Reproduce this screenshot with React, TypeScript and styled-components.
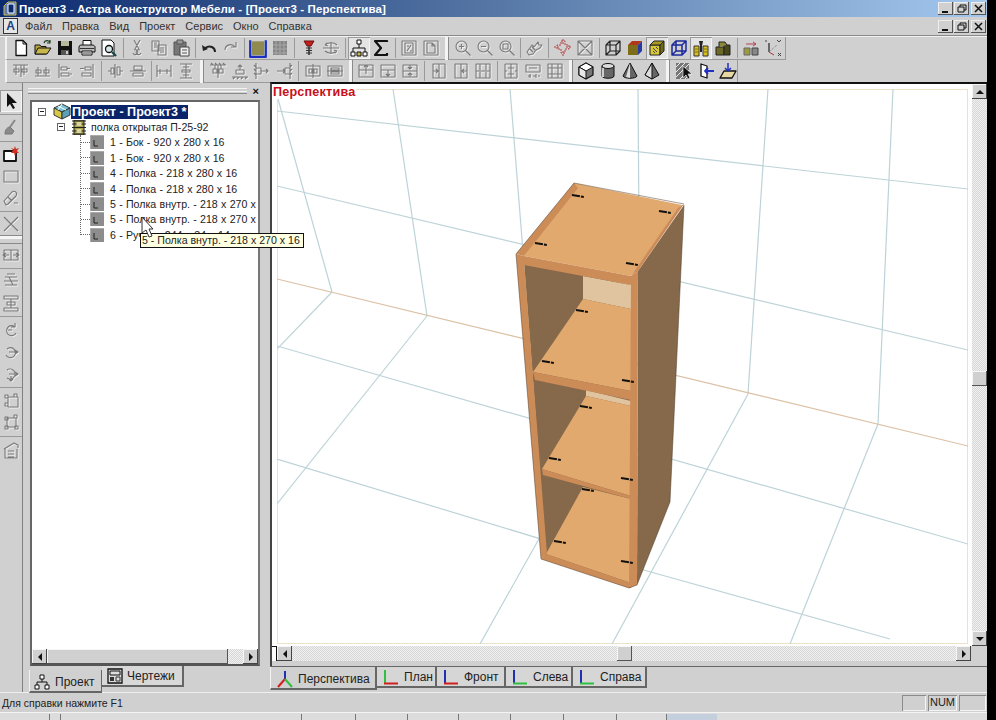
import React from "react";
import styled, { createGlobalStyle } from "styled-components";

const Global = createGlobalStyle`
  html, body { margin: 0; padding: 0; background: #000; overflow: hidden; }
  #root { width: 996px; height: 720px; }
  * { box-sizing: border-box; }
`;
const FACE = "#d0d0d0";
const UI = `"Liberation Sans", Arial, sans-serif`;

const Screen = styled.div`
  width: 996px; height: 720px; display: flex; background: #000; font-family: ${UI}; font-size: 11px; color: #222; overflow: hidden;
`;
const Win = styled.div`
  width: 987px; height: 720px; display: flex; flex-direction: column; background: ${FACE};
`;
const Title = styled.div`
  height: 17px; flex: none; display: flex; align-items: center; padding: 0 1px 0 3px;
  background: linear-gradient(90deg, #0c2a6e 0%, #4e6f9f 45%, #a4c8ee 100%);
  color: #fff; font-weight: bold; font-size: 11.5px;
`;
const TitleText = styled.span` margin-left: 2px; flex: 1; white-space: nowrap; letter-spacing: .12px; `;
const CapBtn = styled.div`
  width: 15px; height: 13px; background: ${FACE}; display: flex; align-items: center; justify-content: center;
  box-shadow: inset -1px -1px #555, inset 1px 1px #eee; margin-left: 1px;
  &:last-child { margin-left: 2px; }
`;
const MenuBar = styled.div`
  height: 19px; flex: none; display: flex; align-items: center; padding: 0 1px 0 3px; border-bottom: 1px solid #8a8a8a;
`;
const MenuLogo = styled.div`
  width: 15px; height: 16px; margin-right: 7px; border: 1px solid #333; background: #e6e6e6; color: #1a3f80; font-weight: bold;
  font-size: 12px; line-height: 14px; text-align: center;
`;
const MenuItem = styled.span` margin-right: 10px; font-size: 11px; letter-spacing: 0; color: #333; `;
const MenuSpacer = styled.div` flex: 1; `;
const TopRows = styled.div` flex: none; border-top: 1px solid #f2f2f2; `;
const Bar = styled.div<{ $start: number; $end: number }>`
  height: 23px; display: flex; align-items: center; margin-left: ${p => p.$start}px; width: ${p => p.$end - p.$start}px;
  padding-left: 3px; border-left: 2px solid #f2f2f2; border-right: 1px solid #9a9a9a; border-bottom: 1px solid #9a9a9a;
`;
const Tool = styled.div<{ $on?: boolean }>`
  width: 22px; height: 22px; flex: none; display: flex; align-items: center; justify-content: center;
  ${p => p.$on ? "background:#e4e4e4; box-shadow: inset 1px 1px #9a9a9a, inset -1px -1px #f6f6f6;" : ""}
`;
const Sep = styled.div<{ $w: number }>`
  width: ${p => p.$w}px; height: 20px; flex: none; display: flex; justify-content: center;
  &::after { content: ""; width: 1px; height: 100%; background: #9a9a9a; }
`;
const Grip = styled.div<{ $w: number }>`
  width: ${p => p.$w}px; height: 23px; flex: none; display: flex; justify-content: center;
  &::after { content: ""; width: 3px; height: 100%; background: #f4f4f4; border-right: 1px solid #8a8a8a; }
`;
const Main = styled.div` height: 609px; flex: none; display: flex; `;
const LeftBar = styled.div`
  width: 23px; flex: none; display: flex; flex-direction: column; padding-top: 7px; border-right: 1px solid #808080;
`;
const LeftTools = styled.div` width: 100%; display: flex; flex-direction: column; align-items: center; `;
const HSep = styled.div<{ $h: number }>`
  width: 100%; height: ${p => p.$h}px; display: flex; align-items: center; flex: none;
  &::after { content: ""; height: 1px; width: 100%; background: #9a9a9a; }
`;
const HBand = styled.div`
  width: 100%; height: 9px; flex: none; background: linear-gradient(#8a8a8a 0 1px, #f4f4f4 1px 4px, ${FACE} 4px 8px, #8a8a8a 8px);
`;
const Panel = styled.div`
  width: 240px; flex: none; position: relative; display: flex; flex-direction: column; margin-left: 1px;
`;
const PanelHead = styled.div` height: 16px; flex: none; display: flex; align-items: center; padding: 0 5px 0 4px; `;
const Grabber = styled.div`
  flex: 1; height: 6px; border-top: 1px solid #f4f4f4; border-bottom: 1px solid #8a8a8a; background: linear-gradient(#f4f4f4, #f4f4f4) center/100% 1px no-repeat;
`;
const CloseX = styled.span` width: 12px; text-align: right; font-size: 11px; font-weight: bold; line-height: 10px; color: #111; `;
const Well = styled.div`
  margin: 1px 4px 0 6px; height: 566px; flex: none; border: 2px solid #666; border-right-color: #777; border-bottom-color: #555; display: flex; flex-direction: column; background: #fff;
`;
const Tree = styled.div` flex: 1; min-height: 0; overflow: hidden; padding-top: 2px; white-space: nowrap; font-size: 10.6px; color: #222; `;
const Row = styled.div<{ $pad: number }>` height: 15.4px; display: flex; align-items: center; padding-left: ${p => p.$pad}px; `;
const Toggle = styled.div`
  width: 8px; height: 8px; flex: none; border: 1px solid #666; position: relative; margin-right: 7px; background: #fff;
  &::after { content: ""; position: absolute; left: 1px; right: 1px; top: 2px; height: 1px; background: #222; }
`;
const RootLabel = styled.span`
  background: #0a246a; color: #fff; font-weight: bold; padding: 0 2px 0 1px; font-size: 12.6px; line-height: 14px;
`;
const NodeLabel = styled.span` margin-left: 5px; `;
const Children = styled.div`
  margin-left: 48px; height: 100px; width: 190px; border-left: 1px dotted #666;
`;
const Dots = styled.div` width: 9px; flex: none; border-bottom: 1px dotted #666; `;
const LeafRow = styled.div` height: 15.4px; display: flex; align-items: center; & > svg { flex: none; } `;
const LeafLabel = styled.span` margin-left: 6px; flex: none; word-spacing: .35px; `;
const ScrollH = styled.div` height: 15px; flex: none; display: flex; background: ${FACE}; `;
const Dither = styled.div`
  flex: 1; position: relative; background: repeating-conic-gradient(#f1f1f1 0 25%, #d6d6d6 0 50%) 0 0/2px 2px;
`;
const ArrowBtn = styled.div<{ $dir: "l" | "r" | "u" | "d" }>`
  width: 15px; height: 15px; flex: none; background: ${FACE}; box-shadow: inset -1px -1px #444, inset 1px 1px #f6f6f6; position: relative;
  &::after {
    content: ""; position: absolute; left: 50%; top: 50%; transform: translate(-50%, -50%);
    border: 4px solid transparent;
    ${p => p.$dir === "l" ? "border-left-width:0; border-right-color:#111;" : p.$dir === "r" ? "border-right-width:0; border-left-color:#111;" : p.$dir === "u" ? "border-top-width:0; border-bottom-color:#111;" : "border-bottom-width:0; border-top-color:#111;"}
  }
`;
const Thumb = styled.div`
  width: 15px; background: ${FACE}; box-shadow: inset -1px -1px #555, inset 1px 1px #f6f6f6;
`;
const PanelThumb = styled.div` width: 181px; background: ${FACE}; box-shadow: inset -1px -1px #555, inset 1px 1px #f6f6f6; `;
const LeftTabs = styled.div` display: flex; margin-left: 5px; align-items: flex-start; height: 25px; `;
const LTab = styled.div<{ $on?: boolean }>`
  display: flex; align-items: center; gap: 4px; font-size: 12px; background: ${FACE}; flex: none;
  ${p => p.$on
    ? "width:73px; height:23px; margin-top:4px; padding:3px 0 0 3px; border-left:1px solid #f0f0f0; border-bottom:2px solid #666; border-right:1px solid #666;"
    : "width:82px; height:21px; padding:0 0 0 5px; border-bottom:2px solid #666; border-right:2px solid #666; background:#d8d8d8;"}
`;
const Splitter = styled.div` width: 6px; flex: none; `;
const View = styled.div` flex: 1; min-width: 0; display: flex; flex-direction: column; `;
const ViewTop = styled.div` display: flex; height: 564px; flex: none; border-top: 2px solid #111; border-left: 2px solid #444; margin-top: -1px; `;
const Canvas = styled.div` flex: 1; min-width: 0; position: relative; background: #fff; padding: 5px 3px 2px 5px; `;
const CanvasLabel = styled.div`
  position: absolute; left: 0; top: 1px; color: #c8101a; font-weight: bold; font-size: 12.6px; background: #fff; padding: 0 1px; letter-spacing: .2px;
`;
const Scene = styled.svg` display: block; width: 691px; height: 555px; `;
const ScrollV = styled.div` width: 15px; flex: none; display: flex; flex-direction: column; `;
const DitherV = styled(Dither)` display: block; `;
const VThumb = styled(Thumb)` position: absolute; left: 0; top: 272px; height: 15px; `;
const HBarRow = styled.div` height: 20px; flex: none; display: flex; border-left: 2px solid #444; padding-bottom: 5px; padding-right: 16px; `;
const SplitBox = styled.div` width: 5px; flex: none; background: #fff; border-right: 1px solid #111; border-top: 1px solid #111; `;
const HThumb = styled(Thumb)` position: absolute; left: 325px; top: 0; height: 15px; `;
const Tabs = styled.div` height: 24px; flex: none; display: flex; align-items: flex-start; border-top: 1px solid #666; `;
const Tab = styled.div<{ $on?: boolean; $w: number }>`
  width: ${p => p.$w}px; display: flex; align-items: center; gap: 4px; font-size: 12px; flex: none; background: #d6d6d6;
  ${p => p.$on
    ? "height:23px; padding:3px 0 0 5px; border-left:1px solid #f4f4f4; border-bottom:2px solid #666; border-right:2px solid #666; background:#d0d0d0;"
    : "height:21px; padding:0 0 0 5px; border-bottom:2px solid #666; border-right:2px solid #666;"}
`;
const Status = styled.div`
  height: 20px; flex: none; display: flex; align-items: center; border-top: 1px solid #f0f0f0; padding: 0 1px 0 2px; font-size: 10.5px; color: #222;
`;
const StatusText = styled.span` flex: 1; `;
const StatusCell = styled.div<{ $w: number }>`
  width: ${p => p.$w}px; height: 16px; margin-left: 2px; text-align: center; line-height: 15px; font-size: 11px;
  box-shadow: inset 1px 1px #8a8a8a, inset -1px -1px #f4f4f4;
`;
const Task = styled.div` flex: 1; min-height: 0; display: flex; background: #dcdcdc; border-top: 1px solid #f4f4f4; padding-top: 1px; `;
const TaskSeg = styled.div<{ $w: number }>` width: ${p => p.$w}px; flex: none; border-right: 1px solid #777; `;
const TaskBlue = styled.div` width: 50px; background: #c4cfde; flex: none; `;
const Tip = styled.div`
  position: absolute; left: 116px; top: 150px; width: 164px; height: 15px; background: #ffffe1; border: 1px solid #111; z-index: 4;
  font-size: 10.6px; line-height: 13px; padding-left: 1px; white-space: nowrap;
`;
const Cursor = styled.svg` position: absolute; left: 117px; top: 133px; z-index: 5; `;

const S: React.FC<{ children: React.ReactNode; s?: number }> = ({ children, s = 18 }) => (
  <svg width={s} height={s} viewBox="0 0 18 18" fill="none" strokeLinejoin="round">{children}</svg>
);
const G: React.FC<{ d: string; c?: string }> = ({ d, c = "#7a7a7a" }) => (
  <S><path d={d} stroke="#f2f2f2" transform="translate(1 1)" strokeWidth="1" /><path d={d} stroke={c} strokeWidth="1.1" /></S>
);

const gray: Record<string, string> = {
  a1: "M1 3h15M4 3v10M12 3v10M2 7h5v3H2zM10 7h5v3h-5zM9 3v12",
  a2: "M1 14h15M4 5v9M12 5v9M2 8h5v3H2zM10 8h5v3h-5z",
  a3: "M3 2v14M5 5h6v3H5zM5 11h8v3H5zM11 6.5l3 0M14 12h2",
  a4: "M15 2v14M7 5h6v3H7zM4 11h9v3H4zM2 6.5h4",
  a5: "M8 2v14M4 6h3v6H4zM10 5h3v8h-3zM1 9h3M13 9h3",
  a6: "M1 9h16M5 4h8v4H5zM4 11h10v3H4z",
  a7: "M2 3v12M16 3v12M5 7v5M12 7v5M2 9h14",
  a8: "M3 2h12M3 16h12M6 5h6M6 13h6M9 2v14M5 8h8v2H5z",
  a9: "M1 3h16M2 1l2 2M6 1l2 2M10 1l2 2M14 1l2 2M6 3v4M12 3v4M4 7h4v4H4zM10 7h4v4h-4zM9 3v13",
  a10: "M1 15h16M2 17l2-2M6 17l2-2M10 17l2-2M14 17l2-2M5 8h8v4H5zM9 3v5M7 5l2-2 2 2",
  a11: "M3 1v16M1 3l2 2M1 7l2 2M1 11l2 2M3 6h5v6H3zM8 9h7M13 7l2 2-2 2",
  a12: "M15 1v16M17 3l-2 2M17 7l-2 2M17 11l-2 2M10 6h5v6h-5zM2 9h8M8 7l2 2-2 2",
  a13: "M2 4h14v10H2zM5 7h3v4H5zM10 7h3v4h-3zM9 2v14",
  a14: "M2 4h14v10H2zM5 6h8v2H5zM5 10h8v2H5zM1 9h16",
  b1: "M2 3h14v12H2zM2 8h14M9 3v9M7 5l2-2 2 2",
  b2: "M2 3h14v12H2zM2 8h14M9 8v6M7 12l2 2 2-2",
  b3: "M2 3h14v12H2zM2 9h14M9 3v4M7 5l2 2 2-2M9 15v-4M7 13l2-2 2 2",
  b4: "M3 2h12v14H3zM9 2v14M3 9h5M6 7l2 2-2 2",
  b5: "M3 2h12v14H3zM9 2v14M15 9h-5M12 7l-2 2 2 2",
  b6: "M2 2h14v14H2zM6 2v14M12 2v14M2 9h3M7 9h4M13 9h3",
  c1: "M3 2h12v14M3 2v14h12M6 6h6M9 2v14M6 12h6M3 9h2M13 9h2",
  c2: "M2 3h14v7H2zM5 6h8M4 14h3M9 14h3M14 14h2M6 12v4M12 12v4",
  c3: "M2 2h14v14H2zM2 6h14M2 12h14M6 2v14M12 2v14",
  cut: "M6 1l5 9M12 1L7 10M6 11a2.5 2.5 0 1 1-1 3M12 11a2.5 2.5 0 1 0 1 3",
  copy: "M2 2h7v10H2zM4 4h3M4 6h3M4 8h3M8 6h8v10H8zM10 9h4M10 11h4M10 13h4",
  redo: "M3 11a5.5 5.5 0 0 1 10-3M14 3v5H9",
  doc1: "M2 2h14v14H2zM5 4h8v10H5zM7 12l4-6M7 7h2M10 12h2",
  doc2: "M2 2h14v14H2zM5 4h5l3 3v7H5zM10 4v3h3",
  zplus: "M7.5 2a5.5 5.5 0 1 1 0 11 5.5 5.5 0 0 1 0-11zM5 7.5h5M7.5 5v5M11.5 11.5l5 5",
  zminus: "M7.5 2a5.5 5.5 0 1 1 0 11 5.5 5.5 0 0 1 0-11zM5 7.5h5M11.5 11.5l5 5",
  zwin: "M7.5 2a5.5 5.5 0 1 1 0 11 5.5 5.5 0 0 1 0-11zM5 5h5v5H5zM11.5 11.5l5 5",
  hand: "M2 13l5-7 2 2 4-5 1 3 3 0-2 3-4 2-3 4-4 1zM5 10l3 3M7 8l3 3",
  xbox: "M2 2h14v14H2zM2 2l14 14M16 2L2 16",
  spin: "M3 6c3-3 9-3 12 0M3 6l2-2M3 6l3 1M15 12c-3 3-9 3-12 0M15 12l-2 2M15 12l-3-1M1 9h16M9 3v12",
  rect: "M2 4h14v11H2z",
  edit: "M4 16L2 12l8-9c3-2 6 1 4 4l-8 8zM6 8l4 4M12 14h4",
  cross: "M2 2l14 14M16 2L2 16",
  l7: "M2 4h14v10H2zM7 9H1M4 7L1 9l3 2M11 9h6M14 7l3 2-3 2M9 4v10",
  al1: "M3 5h12M5 2h8M3 13h12M2 9h14M7 5l4 8",
  al2: "M2 2h14v3H2zM2 14h14v3H2zM9 5v9M5 8h8v3H5z",
  r1: "M13 6a5 5 0 1 0 1 6M13 2v4H9M6 9h4",
  r2: "M5 6a5 5 0 1 1-1 6M7 9h9M13 7l3 2-3 2",
  r3: "M5 5a5 5 0 1 1 0 8M7 9h9M13 7l3 2-3 2M9 11v5M7 14l2 2 2-2",
  bb1: "M3 4h3v3H3zM12 3h3v3h-3zM3 12h3v3H3zM6 6h10v10H6z",
  bb2: "M3 4h3v3H3zM12 2h3v3h-3zM13 13h3v3h-3zM3 13h3v3H3zM5 5h9v9H5z",
  house: "M2 8l10-6 4 2v3M3 8v9h12V8M6 10h6M6 13h6M6 16h6",
};
const Ic: Record<string, React.ReactNode> = {
  new: <S><path d="M4 1.5h7l3.5 3.5v11.5H4z" fill="#fff" stroke="#111" strokeWidth="1.3" /><path d="M11 1.5V5h3.5" stroke="#111" /></S>,
  open: <S><path d="M1 6h5l1 1.500h5V15H1z" fill="#b8a83c" stroke="#111" /><path d="M1 15l3-6h13l-4 6z" fill="#c8b84c" stroke="#111" /><path d="M10 4c1-3 4-3 6-1M16 1v3h-3" stroke="#1a3a1a" strokeWidth="1.2" /></S>,
  save: <S><path d="M2 2h14v14H2z" fill="#111" /><path d="M5 2h8v5H5z" fill="#b8b89a" /><path d="M5 11h8v5H5z" fill="#555" /><path d="M10 12h2v3h-2z" fill="#ccc" /></S>,
  print: <S><path d="M5 1.500h8v5H5z" fill="#fff" stroke="#111" /><path d="M1 8c0-2 2-2 3-2h10c2 0 3 1 3 2v5H1z" fill="#bbb" stroke="#111" /><path d="M4 12h10v4H4z" fill="#fff" stroke="#111" /><path d="M2 9.500h14M5 14h8" stroke="#333" /></S>,
  preview: <S><path d="M2 1h9l3 3v13H2z" fill="#fff" stroke="#111" /><circle cx="9" cy="10" r="3.500" fill="#d8e8e8" stroke="#111" strokeWidth="1.300" /><path d="M12 13l4 4" stroke="#1a4a4a" strokeWidth="2.400" /></S>,
  paste: <S><path d="M2 3h12v13H2z" fill="#777" stroke="#555" /><path d="M5 1h6v4H5z" fill="#999" stroke="#555" /><path d="M8 8h9v9H8z" fill="#eee" stroke="#444" /><path d="M10 11h5M10 14h5" stroke="#555" /></S>,
  undo: <S><path d="M15 13c0-5-5-7-10-4" stroke="#222" strokeWidth="2" /><path d="M2 6l1 6 5-2z" fill="#222" /></S>,
  bluebox: <S s={20}><path d="M2 2v15h14V2" stroke="#1a2fc0" strokeWidth="2" fill="none" /><path d="M3.500 3h11v12.500h-11z" fill="#8f8a4f" /></S>,
  hatch: <S><path d="M2 2h14v14H2z" fill="#868686" /><path d="M2 6h14M2 10h14M2 14h14M5 2v14M9 2v14M13 2v14" stroke="#a6a6a6" /></S>,
  screw: <S><path d="M4 2h10l-3 5H7z" fill="#c02020" stroke="#701010" /><path d="M8 7h2v9H8z" fill="#555" /><path d="M6 9h6M6 11.500h6M6 14h6" stroke="#333" strokeWidth="1.200" /></S>,
  tree: <S><path d="M9 5v4M3 13V9h12v4" stroke="#111" /><path d="M7 1h4v4H7zM1 13h4v4H1zM13 13h4v4h-4z" fill="#fff" stroke="#111" /><path d="M7 13h4v4H7z" fill="#c8b84c" stroke="#111" /></S>,
  sigma: <S><path d="M15 3V2H3l6 7-6 7h12v-2" stroke="#111" strokeWidth="2.200" /></S>,
  target: <S><path d="M7 2h4v4h4v4h-4v4H7v-4H3V6h4zM9 0v5M9 12v6M0 8h5M12 8h6" stroke="#b04040" strokeDasharray="2 1" /></S>,
  wire: <S><path d="M2 6h10v10H2zM6 2h10v10H6zM2 6l4-4M12 6l4-4M12 16l4-4M2 16l4-4" stroke="#222" strokeWidth="1.200" /></S>,
  ccube: <S><path d="M2 6h10v10H2z" fill="#7d6c18" /><path d="M2 6l4-4h10l-4 4z" fill="#b03818" /><path d="M12 6l4-4v10l-4 4z" fill="#2a3aa0" /></S>,
  ycube: <S><path d="M2 6h10v10H2z" fill="#d8c838" stroke="#222" /><path d="M2 6l4-4h10l-4 4z" fill="#a89a20" stroke="#222" /><path d="M12 6l4-4v10l-4 4z" fill="#6e6a18" stroke="#222" /><path d="M5 9l4 4M5 12l2 2M8 8l2 2" stroke="#444" /></S>,
  bcube: <S><path d="M2 6h10v10H2zM6 2h10v10H6zM2 6l4-4M12 6l4-4M12 16l4-4M2 16l4-4" stroke="#1a2a9a" strokeWidth="1.500" /></S>,
  door: <S><path d="M2 7h5v10H2zM11 7h5v10h-5z" fill="#d8c020" stroke="#333" /><path d="M7 2h4l-1 5v6H8V7z" fill="#222" /><path d="M3 10h3M3 13h3M12 10h3M12 13h3" stroke="#7d7010" /></S>,
  olive: <S><path d="M2 8h8v8H2z" fill="#6c6a24" stroke="#222" /><path d="M10 6h6v10h-6z" fill="#48481a" stroke="#222" /><path d="M5 8V3h6l2 3" stroke="#222" fill="#8a8838" /></S>,
  move: <S><path d="M2 9h6v7H2z" fill="#9a9a40" stroke="#666" /><path d="M10 9h6v7h-6z" fill="#888" stroke="#444" /><path d="M4 5h10M11 3l3 2-3 2" stroke="#b04050" /></S>,
  axes: <S><path d="M5 4v9" stroke="#222" strokeWidth="1.200" /><path d="M5 13l5 3" stroke="#b03030" /><path d="M5 13l8-7" stroke="#777" strokeDasharray="1 1" /><path d="M1 2h2M13 1l2 2 2-2M14 14l3 3M17 14l-3 3" stroke="#444" /></S>,
  arrow: <S><path d="M5 1v14l3-3 3 5 2-1-3-5h5z" fill="#111" /></S>,
  brush: <S><path d="M13 1L8 8" stroke="#888" strokeWidth="2" /><path d="M3 15c0-5 3-7 5-7l4 4-2 3z" fill="#8a8a8a" stroke="#777" /></S>,
  flash: <S><path d="M2 6h12v10H2z" fill="#fff" stroke="#111" strokeWidth="1.800" /><path d="M13 1l1 3 3-1-2 3 2 2-3 0-1 3-1-3-3 0 2-3-2-2 3 1z" fill="#d03020" /></S>,
  cube: <S><path d="M9 1l7 4v8l-7 4-7-4V5z" fill="#777" stroke="#111" strokeWidth="1.200" /><path d="M2 5l7 4 7-4-7-4z" fill="#fff" stroke="#111" /><path d="M2 5l7 4v8l-7-4z" fill="#e8e8e8" stroke="#111" /></S>,
  cyl: <S><path d="M3 4v10c0 3 12 3 12 0V4z" fill="#666" stroke="#111" /><ellipse cx="9" cy="4" rx="6" ry="2.500" fill="#ddd" stroke="#111" /><path d="M4 6v9" stroke="#ccc" strokeWidth="2" /></S>,
  cone: <S><path d="M9 1L2 14c1 3 13 3 14 0z" fill="#666" stroke="#111" /><path d="M9 1L5 15l4 1z" fill="#ddd" /></S>,
  pyr: <S><path d="M9 1L2 13l7 4 7-4z" fill="#666" stroke="#111" /><path d="M9 1L2 13l7 4z" fill="#ddd" stroke="#111" /></S>,
  hcur: <S><path d="M1 1h13v16H1z" fill="#777" /><path d="M1 5l4-4M1 10l9-9M1 15L14 2M5 17L14 8M10 17l4-4" stroke="#eee" /><path d="M8 4v12l3-3 2 4 2-1-2-4h4z" fill="#111" stroke="#fff" strokeWidth=".6" /></S>,
  dooro: <S><path d="M4 2l6 2v12l-6-2z" fill="#fff" stroke="#111" strokeWidth="1.300" /><path d="M8 9h9M11 6l-3 3 3 3" stroke="#2030c0" strokeWidth="1.800" /></S>,
  plate: <S><path d="M5 9h12l-4 7H1z" fill="#e6d8a0" stroke="#111" strokeWidth="1.300" /><path d="M9 1v8M6 6l3 3 3-3" stroke="#2030c0" strokeWidth="1.500" /></S>,
  leaf: <svg width="14" height="14" viewBox="0 0 14 14"><path d="M0 0h14v14H0z" fill="#8d8d8d" /><path d="M0 0h14M0 0v14" stroke="#c6c6c6" /><path d="M4 5v6h4" stroke="#222" fill="none" /></svg>,
  film: <svg width="14" height="15" viewBox="0 0 14 15"><path d="M2 0h10v15H2z" fill="#a9a046" stroke="#222" /><path d="M0 1h14M0 4h14M0 7.500h14M0 11h14M0 14h14" stroke="#222" /><path d="M4.500 2h5v4h-5zM4.500 9h5v4h-5z" fill="#d8d4a0" /></svg>,
  proj: <svg width="18" height="17" viewBox="0 0 18 17"><path d="M1 5l8-4 8 4-8 4z" fill="#7cc4d8" stroke="#333" /><path d="M1 5v7l8 4V9z" fill="#d8c848" stroke="#333" /><path d="M17 5v7l-8 4V9z" fill="#5ca0b8" stroke="#333" /><path d="M5 3l8 4M9 1l-4 6" stroke="#fff" /></svg>,
  tabTree: <svg width="18" height="18" viewBox="0 0 18 18" fill="none"><path d="M9 6v3M4 12V9h10v3" stroke="#111" /><path d="M7 2h4v4H7zM2 12h4v4H2zM12 12h4v4h-4z" fill="#fff" stroke="#111" /></svg>,
  tabDraw: <svg width="16" height="16" viewBox="0 0 16 16" fill="none"><path d="M1 1h14v14H1z" stroke="#111" strokeWidth="1.300" fill="#ddd" /><path d="M3 3h10v4H3z" stroke="#111" /><path d="M3 9h4v4H3z" fill="#333" /><path d="M9 9h4v4H9z" stroke="#333" /></svg>,
};
const Icon: React.FC<{ n: string }> = ({ n }) => gray[n] ? <G d={gray[n]} /> : <>{Ic[n]}</>;

type Item = string | number;
const row1: Item[] = ["new", "open", "save", "print", "preview", 6, "cut", "copy", "paste", 6, "undo", "redo", 5, "bluebox", "hatch", 7, "screw", "spin", 6, "*tree", "sigma", 6, "doc1", "doc2", -10, "zplus", "zminus", "zwin", 5, "hand", 7, "target", "xbox", 6, "wire", "ccube", "*ycube", "bcube", "*door", "olive", 6, "move", "axes"];
const row2: Item[] = ["a1", "a2", "a3", "a4", 7, "a5", "a6", 4, "a7", "a8", -10, "a9", "a10", "a11", "a12", 7, "a13", "a14", -9, "b1", "b2", "b3", 7, "b4", "b5", "b6", 6, "c1", "c2", "c3", -9, "cube", "cyl", "cone", "pyr", -10, "hcur", "dooro", "plate"];

const renderItems = (items: Item[]) => items.map((it, i) => {
  if (typeof it === "number") return it < 0 ? <Grip key={i} $w={-it} /> : <Sep key={i} $w={it} />;
  const on = it[0] === "*";
  return <Tool key={i} $on={on}><Icon n={on ? it.slice(1) : it} /></Tool>;
});

type L = string | [number];
const leftTools: L[] = ["arrow", [5], "brush", [4], "flash", "rect", "edit", [4], "cross", [-9], "l7", [4], "al1", "al2", [5], "r1", "r2", "r3", [4], "bb1", "bb2", [6], "house"];

const leaves = ["1 - Бок - 920 x 280 x 16", "1 - Бок - 920 x 280 x 16", "4 - Полка - 218 x 280 x 16", "4 - Полка - 218 x 280 x 16", "5 - Полка внутр. - 218 x 270 x", "5 - Полка внутр. - 218 x 270 x", "6 - Ручка - 244 x 34 x 14"];

const Axis: React.FC<{ v: string; h: string; persp?: boolean }> = ({ v, h, persp }) => (
  <svg width="18" height="18" viewBox="0 0 18 18" fill="none" strokeWidth="2">
    {persp ? <><path d="M9 9V1" stroke="#2030b0" /><path d="M9 9L2 17" stroke="#d02020" /><path d="M9 9l7 8" stroke="#30c040" /></> :
      <><path d="M3 2v14" stroke={v} /><path d="M2 15.500h14" stroke={h} /></>}
  </svg>
);

const floorLines = [
  "M277 350L332 293", "M427 317L277 505", "M640 360L480 645", "M748 395L612 645", "M878 425L790 645",
  "M277 347L968 545", "M277 460L640 570L890 640", "M277 187L968 351", "M277 112L968 190",
  "M278 100L332 293", "M393 90L427 317", "M510 90L530 340", "M638 90L640 368", "M768 90L748 395", "M893 90L878 425",
];
const screws: [number, number][] = [[578, 197], [665, 213], [541, 245], [632, 265], [582, 312], [548, 363], [628, 382], [586, 408], [555, 460], [627, 480], [588, 491], [560, 543], [627, 563]];
const polys: [string, string][] = [
  ["#86694a", "638,272 684,206 670,503 637,586"],
  ["#86694a", "524,262 631,286 630,586 546,556"],
  ["#e0c4a0", "583,277 631,286 631,310 583,300"],
  ["#e0c4a0", "586,391 631,402 631,407 586,397"],
  ["#e2a96e", "583,300 631,310 631,392 533,373"],
  ["#cc8c58", "533,373 631,392 631,401 535,381"],
  ["#e2a96e", "586,397 631,407 631,497 542,470"],
  ["#cc8c58", "542,470 631,497 631,500 543,476"],
  ["#e2a96e", "583,488 631,500 631,584 546,555"],
  ["#cc8c58", "541,560 546,555 631,584 631,589 629,589"],
  ["#cc8c58", "516,255 524,257 524,262 547,555 541,560"],
  ["#cc8c58", "631,277 638,272 637,586 629,589"],
  ["#e2a96e", "574,184 682,206 631,277 524,257"],
  ["#cc8c58", "574,184 578,189 524,257 516,255"],
  ["#cc8c58", "684,205 638,272 631,277 678,209"],
  ["#cc8c58", "524,257 631,277 631,286 524,266"],
];

export default function App() {
  return (
    <Screen>
      <Global />
      <Win>
        <Title>
          <svg width="14" height="15" viewBox="0 0 14 15" fill="none"><path d="M1 14V5l4-4h8v13z" fill="#5a7ab0" stroke="#c8b84c" /><path d="M5 3h6v9H5z" fill="#0c2a6e" stroke="#fff" /></svg>
          <TitleText>Проект3 - Астра Конструктор Мебели - [Проект3 - Перспектива]</TitleText>
          <CapBtn><svg width="9" height="9"><path d="M1 8h6" stroke="#111" strokeWidth="2" /></svg></CapBtn>
          <CapBtn><svg width="10" height="9" fill="none"><path d="M3 3V1h6v5H7M1 3h6v5H1z" stroke="#111" /></svg></CapBtn>
          <CapBtn><svg width="9" height="9"><path d="M1 1l7 7M8 1L1 8" stroke="#111" strokeWidth="1.500" /></svg></CapBtn>
        </Title>
        <MenuBar>
          <MenuLogo>А</MenuLogo>
          {["Файл", "Правка", "Вид", "Проект", "Сервис", "Окно", "Справка"].map(m => <MenuItem key={m}>{m}</MenuItem>)}
          <MenuSpacer />
          <CapBtn><svg width="9" height="9"><path d="M1 8h6" stroke="#111" strokeWidth="2" /></svg></CapBtn>
          <CapBtn><svg width="10" height="9" fill="none"><path d="M3 3V1h6v5H7M1 3h6v5H1z" stroke="#111" /></svg></CapBtn>
          <CapBtn><svg width="9" height="9"><path d="M1 1l7 7M8 1L1 8" stroke="#111" strokeWidth="1.500" /></svg></CapBtn>
        </MenuBar>
        <TopRows>
          <Bar $start={5} $end={786}>{renderItems(row1)}</Bar>
          <Bar $start={5} $end={738}>{renderItems(row2)}</Bar>
        </TopRows>
        <Main>
          <LeftBar>
            <LeftTools>
              {leftTools.map((t, i) => typeof t === "string"
                ? <Tool key={i} $on={t === "arrow"}><Icon n={t} /></Tool>
                : t[0] < 0 ? <HBand key={i} /> : <HSep key={i} $h={t[0]} />)}
            </LeftTools>
          </LeftBar>
          <Panel>
            <PanelHead><Grabber /><CloseX>×</CloseX></PanelHead>
            <Well>
              <Tree>
                <Row $pad={6}><Toggle />{Ic.proj}<RootLabel>Проект - Проект3 *</RootLabel></Row>
                <Row $pad={25}><Toggle />{Ic.film}<NodeLabel>полка открытая П-25-92</NodeLabel></Row>
                <Children>
                  {leaves.map((l, i) => <LeafRow key={i}><Dots />{Ic.leaf}<LeafLabel>{l}</LeafLabel></LeafRow>)}
                </Children>
              </Tree>
              <ScrollH>
                <ArrowBtn $dir="l" /><PanelThumb /><Dither /><ArrowBtn $dir="r" />
              </ScrollH>
            </Well>
            <LeftTabs>
              <LTab $on>{Ic.tabTree}Проект</LTab>
              <LTab>{Ic.tabDraw}Чертежи</LTab>
            </LeftTabs>
            <Tip>5 - Полка внутр. - 218 x 270 x 16</Tip>
            <Cursor width="12" height="22" viewBox="0 0 12 22"><path d="M1 1v16l4-3 3 7 3-1-3-7h4z" fill="#fff" stroke="#333" /></Cursor>
          </Panel>
          <Splitter />
          <View>
            <ViewTop>
              <Canvas>
                <CanvasLabel>Перспектива</CanvasLabel>
                <Scene viewBox="277 90 691 555">
                  <rect x="277.500" y="90.500" width="690" height="554" fill="#fff" stroke="#ece2c8" />
                  {floorLines.map((d, i) => <path key={i} d={d} stroke="#bdd3d8" strokeWidth="1.200" fill="none" />)}
                  <path d="M277 280L968 447" stroke="#dcc0a4" strokeWidth="1.200" />
                  {polys.map(([c, p], i) => <polygon key={i} points={p} fill={c} />)}
                  <path d="M574 184L684 205M516 255L574 184M516 255L541 560L629 589L637 586L670 503L684 206" stroke="#4c3828" strokeWidth=".7" fill="none" opacity=".7" />
                  {screws.map(([x, y], i) => <path key={i} d={`M${x - 6} ${y - 1}L${x + 6} ${y + 1}`} stroke="#111" strokeWidth="2" strokeDasharray="8 1 3" />)}
                </Scene>
              </Canvas>
              <ScrollV>
                <ArrowBtn $dir="u" />
                <DitherV><VThumb /></DitherV>
                <ArrowBtn $dir="d" />
              </ScrollV>
            </ViewTop>
            <HBarRow>
              <SplitBox />
              <ArrowBtn $dir="l" />
              <Dither><HThumb /></Dither>
              <ArrowBtn $dir="r" />
            </HBarRow>
            <Tabs>
              <Tab $on $w={107}><Axis persp v="" h="" />Перспектива</Tab>
              <Tab $w={60}><Axis v="#30c040" h="#d02020" />План</Tab>
              <Tab $w={69}><Axis v="#2030b0" h="#d02020" />Фронт</Tab>
              <Tab $w={67}><Axis v="#2030b0" h="#30c040" />Слева</Tab>
              <Tab $w={74}><Axis v="#2030b0" h="#30c040" />Справа</Tab>
            </Tabs>
          </View>
        </Main>
        <Status>
          <StatusText>Для справки нажмите F1</StatusText>
          <StatusCell $w={24} />
          <StatusCell $w={29}>NUM</StatusCell>
          <StatusCell $w={27} />
        </Status>
        <Task>
          <TaskSeg $w={50} /><TaskSeg $w={11} /><TaskSeg $w={241} /><TaskSeg $w={54} /><TaskSeg $w={52} /><TaskSeg $w={51} /><TaskSeg $w={52} /><TaskSeg $w={53} /><TaskSeg $w={53} />
          <TaskSeg $w={50} /><TaskBlue />
        </Task>
      </Win>
    </Screen>
  );
}
